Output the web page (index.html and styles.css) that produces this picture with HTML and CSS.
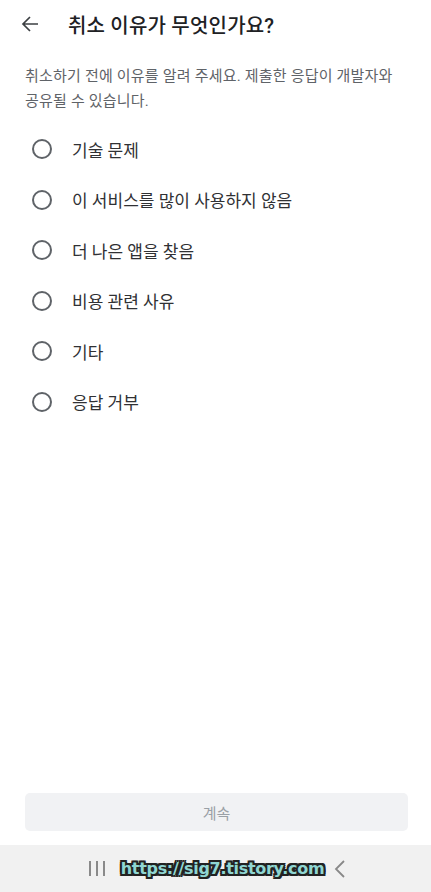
FILE: index.html
```html
<!DOCTYPE html>
<html lang="ko">
<head>
  <meta charset="UTF-8" />
  <meta name="viewport" content="width=device-width, initial-scale=1.0"/>
  <title>취소 이유</title>
  <link rel="stylesheet" href="styles.css">
</head>
<body>
  <div class="screen">
    <header class="topbar">
      <button class="back" aria-label="뒤로">
        <svg width="20" height="20" viewBox="0 0 20 20"><path d="M18 10H3 M10 3 L3 10 L10 17" fill="none" stroke="#3c4043" stroke-width="1.7"/></svg>
      </button>
      <h1>취소 이유가 무엇인가요?</h1>
    </header>

    <p class="desc">취소하기 전에 이유를 알려 주세요. 제출한 응답이 개발자와 공유될 수 있습니다.</p>

    <ul class="options">
      <li><span class="radio"></span>기술 문제</li>
      <li><span class="radio"></span>이 서비스를 많이 사용하지 않음</li>
      <li><span class="radio"></span>더 나은 앱을 찾음</li>
      <li><span class="radio"></span>비용 관련 사유</li>
      <li><span class="radio"></span>기타</li>
      <li><span class="radio"></span>응답 거부</li>
    </ul>

    <div class="footer">
      <button class="continue" disabled>계속</button>
    </div>
  </div>

  <nav class="navbar">
    <span class="nav-recent"><i></i><i></i><i></i></span>
    <span class="watermark">https://sig7.tistory.com</span>
    <svg class="nav-back" width="12" height="20" viewBox="0 0 12 20"><path d="M10 2 L2 10 L10 18" fill="none" stroke="#888" stroke-width="1.8"/></svg>
  </nav>
</body>
</html>
```

FILE: styles.css
```css
* { box-sizing: border-box; }
body { margin: 0; font-family: Roboto, "Noto Sans CJK KR", sans-serif; background: #fff; color: #202124; }
.screen { height: 845px; display: flex; flex-direction: column; }
.topbar { display: flex; align-items: center; height: 48px; padding-left: 15px; }
.back { border: 0; background: none; padding: 0; width: 30px; height: 30px; display: flex; align-items: center; justify-content: center; }
.topbar h1 { font-size: 20px; font-weight: 500; margin: 0 0 0 23px; letter-spacing: 0.2px; }
.desc { margin: 16px 25px 0 25px; font-size: 15px; line-height: 25px; color: #5f6368; word-break: keep-all; letter-spacing: 0.2px; }
.options { list-style: none; margin: 10px 0 0 0; padding: 0; }
.options li { display: flex; align-items: center; height: 50.5px; padding-left: 32px; font-size: 17px; color: #303134; }
.radio { width: 20px; height: 20px; border: 2px solid #5f6368; border-radius: 50%; margin-right: 20px; flex-shrink: 0; }
.footer { margin-top: auto; padding: 0 23px 14px 25px; }
.continue { width: 100%; height: 38px; border: 0; border-radius: 5px; background: #f1f2f4; color: #9aa0a6; font-size: 15px; font-family: inherit; }
.navbar { height: 47px; background: #f1f1f1; display: flex; align-items: center; justify-content: center; padding-left: 4px; }
.nav-recent { display: flex; gap: 5px; margin-right: 16px; }
.nav-recent i { display: block; width: 2px; height: 15px; background: #8a8a8a; }
.watermark { font-family: "DejaVu Sans", sans-serif; font-weight: bold; font-size: 16px; color: #8fd6d2; letter-spacing: -0.3px;
  text-shadow: -2px -2px 0 #222, 2px -2px 0 #222, -2px 2px 0 #222, 2px 2px 0 #222, 0 2px 0 #222, 0 -2px 0 #222, 2px 0 0 #222, -2px 0 0 #222; }
.nav-back { margin-left: 10px; }
```
